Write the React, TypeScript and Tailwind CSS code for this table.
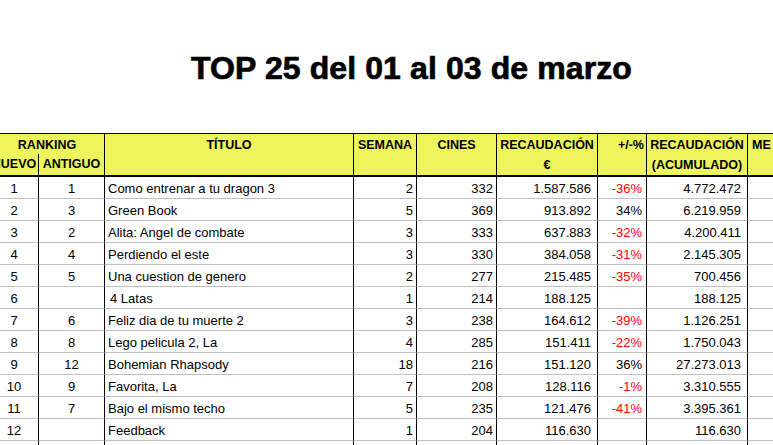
import React from "react";

type Row = {
  nuevo: string;
  antiguo: string;
  titulo: string;
  semana: string;
  cines: string;
  recaudacion: string;
  variacion: string;
  acumulado: string;
  indent?: boolean;
};

const rows: Row[] = [
  { nuevo: "1", antiguo: "1", titulo: "Como entrenar a tu dragon 3", semana: "2", cines: "332", recaudacion: "1.587.586", variacion: "-36%", acumulado: "4.772.472" },
  { nuevo: "2", antiguo: "3", titulo: "Green Book", semana: "5", cines: "369", recaudacion: "913.892", variacion: "34%", acumulado: "6.219.959" },
  { nuevo: "3", antiguo: "2", titulo: "Alita: Angel de combate", semana: "3", cines: "333", recaudacion: "637.883", variacion: "-32%", acumulado: "4.200.411" },
  { nuevo: "4", antiguo: "4", titulo: "Perdiendo el este", semana: "3", cines: "330", recaudacion: "384.058", variacion: "-31%", acumulado: "2.145.305" },
  { nuevo: "5", antiguo: "5", titulo: "Una cuestion de genero", semana: "2", cines: "277", recaudacion: "215.485", variacion: "-35%", acumulado: "700.456" },
  { nuevo: "6", antiguo: "", titulo: "4 Latas", semana: "1", cines: "214", recaudacion: "188.125", variacion: "", acumulado: "188.125", indent: true },
  { nuevo: "7", antiguo: "6", titulo: "Feliz dia de tu muerte 2", semana: "3", cines: "238", recaudacion: "164.612", variacion: "-39%", acumulado: "1.126.251" },
  { nuevo: "8", antiguo: "8", titulo: "Lego pelicula 2, La", semana: "4", cines: "285", recaudacion: "151.411", variacion: "-22%", acumulado: "1.750.043" },
  { nuevo: "9", antiguo: "12", titulo: "Bohemian Rhapsody", semana: "18", cines: "216", recaudacion: "151.120", variacion: "36%", acumulado: "27.273.013" },
  { nuevo: "10", antiguo: "9", titulo: "Favorita, La", semana: "7", cines: "208", recaudacion: "128.116", variacion: "-1%", acumulado: "3.310.555" },
  { nuevo: "11", antiguo: "7", titulo: "Bajo el mismo techo", semana: "5", cines: "235", recaudacion: "121.476", variacion: "-41%", acumulado: "3.395.361" },
  { nuevo: "12", antiguo: "", titulo: "Feedback", semana: "1", cines: "204", recaudacion: "116.630", variacion: "", acumulado: "116.630" },
  { nuevo: "", antiguo: "", titulo: "", semana: "", cines: "", recaudacion: "", variacion: "", acumulado: "" },
];

const cols = "grid grid-cols-[49px_66px_249px_63px_80px_101px_49px_101px_80px]";
const cell = "h-[22px] border-r border-b border-r-black border-b-[#c0c0c0] leading-[21px] pt-[1px] whitespace-nowrap overflow-hidden";
const hcell = "border-r border-black text-center";

export default function App() {
  return (
    <div className="w-[773px] h-[445px] overflow-hidden bg-white text-black font-['Liberation_Sans',Arial,sans-serif]">
      {/* title */}
      <div className="h-[133px] pt-[52px] pl-[191px]">
        <h1 className="text-[32px] leading-[32px] font-bold whitespace-nowrap tracking-[0.1px] [-webkit-text-stroke:0.7px_black]">TOP 25 del 01 al 03 de marzo</h1>
      </div>

      <div className="ml-[-10px] w-[838px]">
        {/* header */}
        <div className={`${cols} grid-rows-[20px_21px] border-t border-b-2 border-black bg-[#eef55c] text-[12.5px] font-bold`}>
          <div className="col-span-2 border-r border-black text-center leading-[20px] pt-[1px]">RANKING</div>
          <div className={`${hcell} row-span-2 leading-[20px] pt-[1px]`}>TÍTULO</div>
          <div className={`${hcell} row-span-2 leading-[20px] pt-[1px]`}>SEMANA</div>
          <div className={`${hcell} row-span-2 leading-[20px] pt-[1px]`}>CINES</div>
          <div className={`${hcell} row-span-2 pt-[1px]`}>
            <div className="leading-[20px]">RECAUDACIÓN</div>
            <div className="leading-[21px]">€</div>
          </div>
          <div className="row-span-2 border-r border-black text-right pr-[2px] leading-[20px] pt-[1px]">+/-%</div>
          <div className={`${hcell} row-span-2 pt-[1px]`}>
            <div className="leading-[20px]">RECAUDACIÓN</div>
            <div className="leading-[21px]">(ACUMULADO)</div>
          </div>
          <div className="row-span-2 pl-[4px] leading-[20px] pt-[1px]">ME</div>
          <div className={`${hcell} leading-[21px]`}>NUEVO</div>
          <div className={`${hcell} leading-[21px]`}>ANTIGUO</div>
        </div>

        {/* body */}
        <div className="text-[13px]">
          {rows.map((r, i) => (
            <div key={i} className={cols}>
              <div className={`${cell} text-center`}>{r.nuevo}</div>
              <div className={`${cell} text-center`}>{r.antiguo}</div>
              <div className={`${cell} ${r.indent ? "pl-[5px]" : "pl-[3px]"}`}>{r.titulo}</div>
              <div className={`${cell} text-right pr-[3px]`}>{r.semana}</div>
              <div className={`${cell} text-right pr-[3px]`}>{r.cines}</div>
              <div className={`${cell} text-right pr-[6px]`}>{r.recaudacion}</div>
              <div className={`${cell} text-right pr-[4px] ${r.variacion.startsWith("-") ? "text-[#ff0000]" : ""}`}>{r.variacion}</div>
              <div className={`${cell} text-right pr-[6px]`}>{r.acumulado}</div>
              <div className={`${cell} border-r-0`}></div>
            </div>
          ))}
        </div>
      </div>
    </div>
  );
}
